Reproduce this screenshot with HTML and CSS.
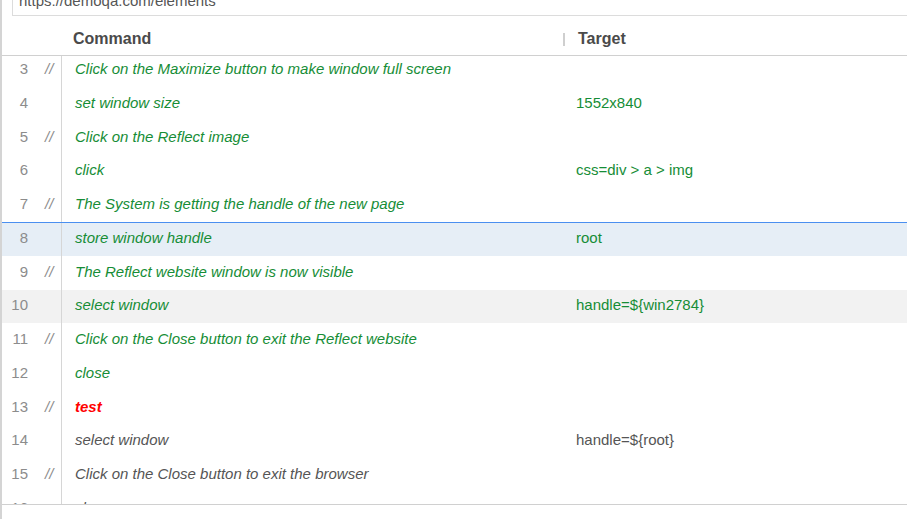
FILE: index.html
```html
<!DOCTYPE html>
<html>
<head>
<meta charset="utf-8">
<link rel="stylesheet" href="styles.css">
</head>
<body>
<div class="app">
  <div class="url-wrap"><div class="url">https://demoqa.com/elements</div></div>
  <div class="thead">
    <div class="h-num"></div>
    <div class="h-cmd">Command</div>
    <div class="h-tgt"><span class="sep"></span>Target</div>
  </div>
  <div class="tbody">
    <div class="rows">
      <div class="row ok"><div class="num"><span class="ln">3</span><span class="cm">//</span></div><div class="cmd">Click on the Maximize button to make window full screen</div><div class="tgt"></div></div>
      <div class="row ok"><div class="num"><span class="ln">4</span><span class="cm"></span></div><div class="cmd">set window size</div><div class="tgt">1552x840</div></div>
      <div class="row ok"><div class="num"><span class="ln">5</span><span class="cm">//</span></div><div class="cmd">Click on the Reflect image</div><div class="tgt"></div></div>
      <div class="row ok"><div class="num"><span class="ln">6</span><span class="cm"></span></div><div class="cmd">click</div><div class="tgt">css=div &gt; a &gt; img</div></div>
      <div class="row ok"><div class="num"><span class="ln">7</span><span class="cm">//</span></div><div class="cmd">The System is getting the handle of the new page</div><div class="tgt"></div></div>
      <div class="row ok selected"><div class="num"><span class="ln">8</span><span class="cm"></span></div><div class="cmd">store window handle</div><div class="tgt">root</div></div>
      <div class="row ok"><div class="num"><span class="ln">9</span><span class="cm">//</span></div><div class="cmd">The Reflect website window is now visible</div><div class="tgt"></div></div>
      <div class="row ok hover"><div class="num"><span class="ln">10</span><span class="cm"></span></div><div class="cmd">select window</div><div class="tgt">handle=${win2784}</div></div>
      <div class="row ok"><div class="num"><span class="ln">11</span><span class="cm">//</span></div><div class="cmd">Click on the Close button to exit the Reflect website</div><div class="tgt"></div></div>
      <div class="row ok"><div class="num"><span class="ln">12</span><span class="cm"></span></div><div class="cmd">close</div><div class="tgt"></div></div>
      <div class="row fail"><div class="num"><span class="ln">13</span><span class="cm">//</span></div><div class="cmd">test</div><div class="tgt"></div></div>
      <div class="row"><div class="num"><span class="ln">14</span><span class="cm"></span></div><div class="cmd">select window</div><div class="tgt">handle=${root}</div></div>
      <div class="row"><div class="num"><span class="ln">15</span><span class="cm">//</span></div><div class="cmd">Click on the Close button to exit the browser</div><div class="tgt"></div></div>
      <div class="row"><div class="num"><span class="ln">16</span><span class="cm"></span></div><div class="cmd">close</div><div class="tgt"></div></div>
    </div>
  </div>
  <div class="foot"></div>
</div>
</body>
</html>
```

FILE: styles.css
```css
* { box-sizing: border-box; }
html, body { margin: 0; padding: 0; background: #fff; }
body {
  font-family: "Liberation Sans", Arial, sans-serif;
  width: 907px;
  height: 519px;
  overflow: hidden;
}
.app {
  height: 519px;
  border-left: 2px solid #d4d4d4;
  display: flex;
  flex-direction: column;
}
.url-wrap {
  height: 16px;
  flex: none;
  padding-left: 10px;
  display: flex;
  align-items: flex-end;
  overflow: hidden;
}
.url {
  flex: 1;
  height: 30px;
  border-left: 1px solid #dcdcdc;
  border-bottom: 1px solid #dcdcdc;
  padding: 0 0 5px 6px;
  font-size: 15px;
  line-height: 18px;
  color: #555;
  display: flex;
  align-items: flex-end;
}
.thead {
  flex: none;
  height: 40px;
  padding-top: 7px;
  border-bottom: 1px solid #d0d0d0;
  display: flex;
  align-items: center;
  font-size: 16px;
  font-weight: bold;
  color: #4a4a4a;
}
.h-num { width: 59px; }
.h-cmd { width: 502px; padding-left: 12px; }
.h-tgt { display: flex; align-items: center; }
.sep {
  width: 2px;
  height: 13px;
  background: #cfcfcf;
  margin-right: 13px;
}
.tbody {
  flex: none;
  height: 448px;
  overflow: hidden;
}
.rows { margin-top: -2.75px; }
.row {
  height: 33.75px;
  display: flex;
  font-size: 15px;
  color: #555;
}
.row > div { display: flex; align-items: center; padding-bottom: 3px; }
.num { width: 59px; color: #8c8c8c; }
.ln { width: 26px; text-align: right; }
.cm { padding-left: 17px; font-style: italic; }
.cmd {
  width: 515px;
  border-left: 1px solid #d6d6d6;
  padding-left: 13px;
  font-style: italic;
}
.tgt { flex: 1; }
.ok .cmd, .ok .tgt { color: #168d36; }
.fail .cmd { color: #f00; font-weight: bold; }
.selected { background: #e6eef6; border-top: 1px solid #4a8ff0; }
.hover { background: #f2f2f2; }
.foot {
  flex: 1;
  border-top: 1px solid #d0d0d0;
}
```
